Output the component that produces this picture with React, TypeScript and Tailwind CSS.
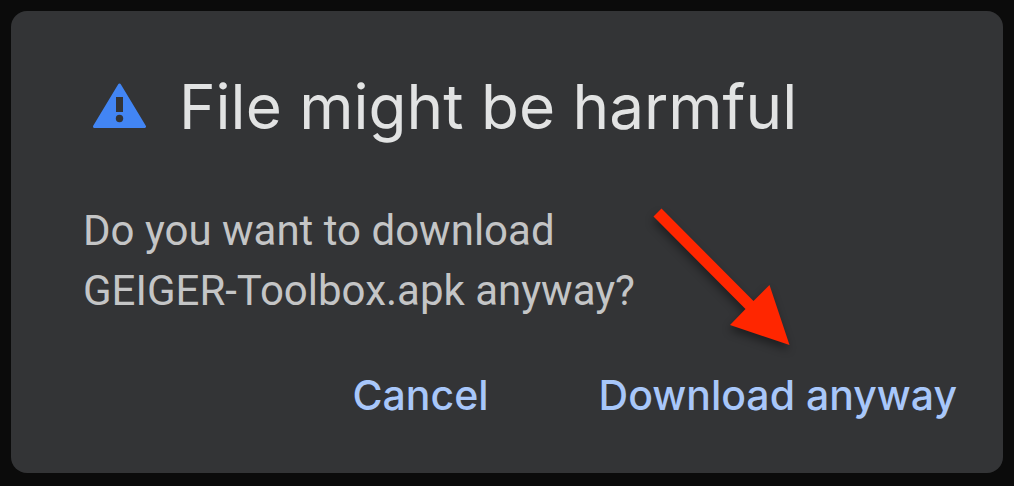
export default function App() {
  return (
    <main className="min-h-screen bg-[#0b0b0b] p-[11px] pb-[13px] font-['Roboto',sans-serif]">
      <section role="alertdialog" aria-labelledby="title" aria-describedby="message" className="relative flex min-h-[462px] flex-col rounded-2xl bg-[#333436] pt-[60px] pr-[46px] pb-12 pl-[72px]">
        <header className="flex items-center gap-8 pl-[10px]">
          <svg className="h-12 w-[54px] shrink-0" viewBox="0 0 54 48" aria-hidden="true">
            <path fill="#4285f4" stroke="#4285f4" strokeWidth="3" strokeLinejoin="round" d="M26.5 2 51.5 43.500H1.500Z" />
            <path fill="#333436" d="M23 14h7v15h-7z" />
            <circle cx="26.500" cy="35.500" r="3.700" fill="#333436" />
          </svg>
          <h1 id="title" className="font-['Inter',sans-serif] text-[62px] leading-[72px] text-[#e2e3e3]">File might be harmful</h1>
        </header>
        <p id="message" className="mt-[58px] text-[42px] leading-[60px] text-[#c4c5c6]">
          Do you want to download
          <br />
          GEIGER-Toolbox.apk anyway?
        </p>
        <footer className="mt-[46px] flex justify-end gap-[110px] font-['Inter',sans-serif] text-[41px] leading-[56px] font-medium text-[#a8c7fa]">
          <button type="button">Cancel</button>
          <button type="button">Download anyway</button>
        </footer>
        <svg className="absolute top-[190px] left-[635px] h-[160px] w-[160px] overflow-visible drop-shadow-[-1px_5px_4px_rgba(0,0,0,0.4)]" viewBox="0 0 160 160" aria-hidden="true">
          <path fill="#ff2600" d="M15.500 7.500 107.500 100 123.500 84 143.500 144 84 124 99.500 108 7.500 15.500Z" />
        </svg>
      </section>
    </main>
  );
}
